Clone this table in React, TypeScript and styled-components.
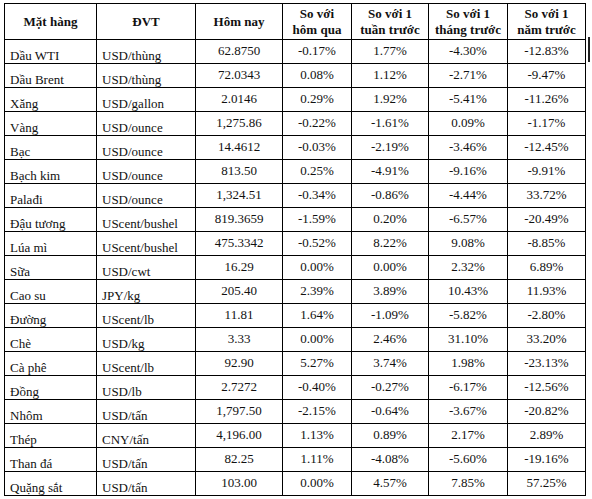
import * as React from 'react';
import styled, { createGlobalStyle } from 'styled-components';

const GlobalStyle = createGlobalStyle`
  html, body {
    margin: 0;
    padding: 0;
    background: #ffffff;
  }
  body {
    font-family: "Liberation Serif", "Times New Roman", serif;
    color: #111111;
  }
`;

const Page = styled.div`
  position: relative;
  padding: 3px 0 0 4px;
  width: 592px;
  height: 499px;
  box-sizing: border-box;
`;

const Table = styled.table`
  border-collapse: collapse;
  table-layout: fixed;
  width: 582px;
  font-size: 13px;
`;

const HeadCell = styled.th`
  border: 1px solid #000;
  height: 35px;
  padding: 0 2px;
  font-weight: bold;
  line-height: 16px;
  text-align: center;
  vertical-align: middle;
`;

const Row = styled.tr`
  height: 24px;
`;

const TextCell = styled.td`
  border: 1px solid #000;
  padding: 0 0 0 5px;
  text-align: left;
  vertical-align: bottom;
  line-height: 15px;
  white-space: nowrap;
`;

const NumCell = styled.td`
  border: 1px solid #000;
  padding: 0 0 3px;
  text-align: center;
  vertical-align: middle;
  line-height: 15px;
  white-space: nowrap;
`;

const Mark = styled.div`
  position: absolute;
  left: 588px;
  top: 37px;
  width: 2px;
  height: 25px;
  background: #222;
`;

type Item = [string, string, string, string, string, string, string];

const items: Item[] = [
  ['Dầu WTI', 'USD/thùng', '62.8750', '-0.17%', '1.77%', '-4.30%', '-12.83%'],
  ['Dầu Brent', 'USD/thùng', '72.0343', '0.08%', '1.12%', '-2.71%', '-9.47%'],
  ['Xăng', 'USD/gallon', '2.0146', '0.29%', '1.92%', '-5.41%', '-11.26%'],
  ['Vàng', 'USD/ounce', '1,275.86', '-0.22%', '-1.61%', '0.09%', '-1.17%'],
  ['Bạc', 'USD/ounce', '14.4612', '-0.03%', '-2.19%', '-3.46%', '-12.45%'],
  ['Bạch kim', 'USD/ounce', '813.50', '0.25%', '-4.91%', '-9.16%', '-9.91%'],
  ['Palađi', 'USD/ounce', '1,324.51', '-0.34%', '-0.86%', '-4.44%', '33.72%'],
  ['Đậu tương', 'UScent/bushel', '819.3659', '-1.59%', '0.20%', '-6.57%', '-20.49%'],
  ['Lúa mì', 'UScent/bushel', '475.3342', '-0.52%', '8.22%', '9.08%', '-8.85%'],
  ['Sữa', 'USD/cwt', '16.29', '0.00%', '0.00%', '2.32%', '6.89%'],
  ['Cao su', 'JPY/kg', '205.40', '2.39%', '3.89%', '10.43%', '11.93%'],
  ['Đường', 'UScent/lb', '11.81', '1.64%', '-1.09%', '-5.82%', '-2.80%'],
  ['Chè', 'USD/kg', '3.33', '0.00%', '2.46%', '31.10%', '33.20%'],
  ['Cà phê', 'UScent/lb', '92.90', '5.27%', '3.74%', '1.98%', '-23.13%'],
  ['Đồng', 'USD/lb', '2.7272', '-0.40%', '-0.27%', '-6.17%', '-12.56%'],
  ['Nhôm', 'USD/tấn', '1,797.50', '-2.15%', '-0.64%', '-3.67%', '-20.82%'],
  ['Thép', 'CNY/tấn', '4,196.00', '1.13%', '0.89%', '2.17%', '2.89%'],
  ['Than đá', 'USD/tấn', '82.25', '1.11%', '-4.08%', '-5.60%', '-19.16%'],
  ['Quặng sắt', 'USD/tấn', '103.00', '0.00%', '4.57%', '7.85%', '57.25%'],
];

const widths = [92, 99, 87, 69, 77, 79, 78];

const heads: React.ReactNode[] = [
  'Mặt hàng',
  'ĐVT',
  'Hôm nay',
  <>So với<br />hôm qua</>,
  <>So với 1<br />tuần trước</>,
  <>So với 1<br />tháng trước</>,
  <>So với 1<br />năm trước</>,
];

export default function App() {
  return (
    <Page>
      <GlobalStyle />
      <Table>
        <colgroup>
          {widths.map((w, i) => (
            <col key={i} style={{ width: w }} />
          ))}
        </colgroup>
        <thead>
          <tr>
            {heads.map((h, i) => (
              <HeadCell key={i}>{h}</HeadCell>
            ))}
          </tr>
        </thead>
        <tbody>
          {items.map((it) => (
            <Row key={it[0]}>
              <TextCell>{it[0]}</TextCell>
              <TextCell>{it[1]}</TextCell>
              {it.slice(2).map((v, j) => (
                <NumCell key={j}>{v}</NumCell>
              ))}
            </Row>
          ))}
        </tbody>
      </Table>
      <Mark />
    </Page>
  );
}
